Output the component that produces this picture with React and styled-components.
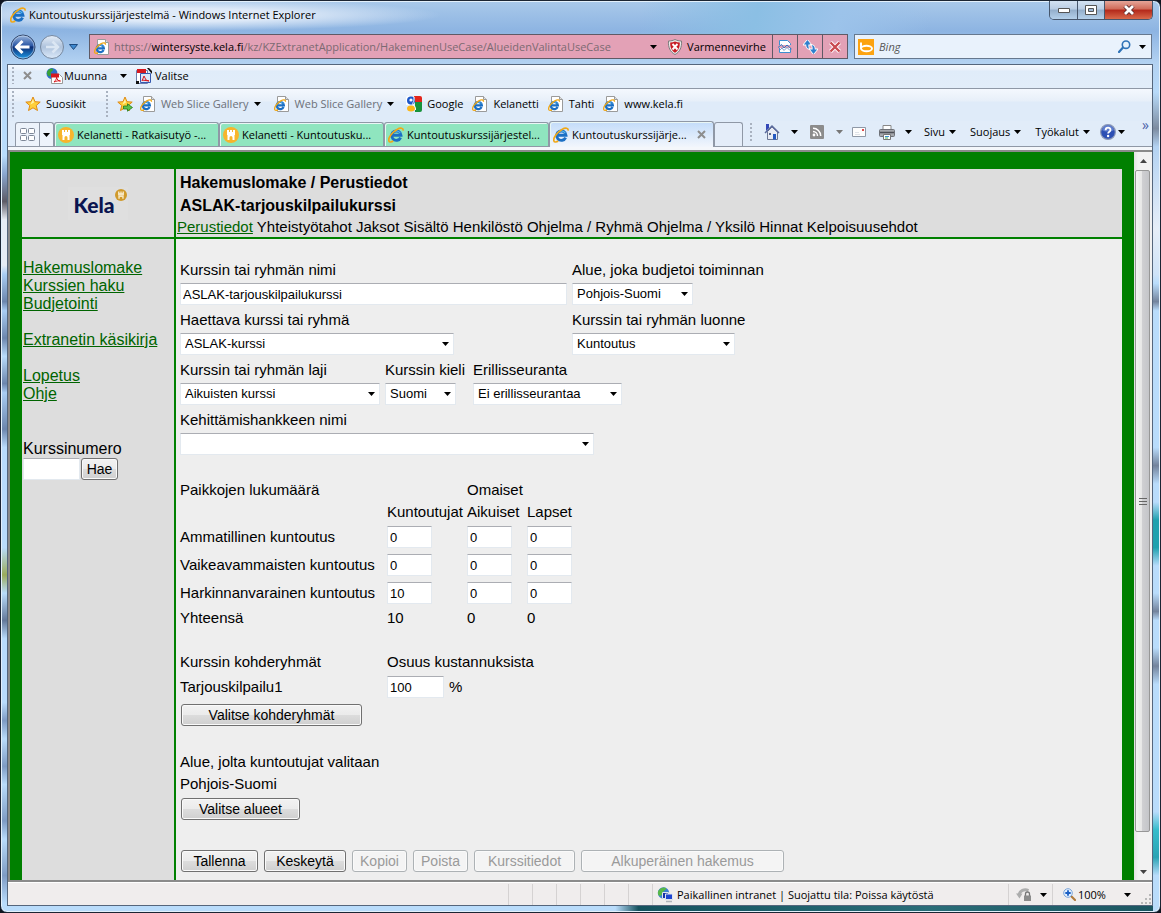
import React, { useState } from 'react';

// Styled Component
import styled, { createGlobalStyle, css } from 'styled-components';

const UI_FONT = "'Open Sans', 'Noto Sans', sans-serif";
const PAGE_FONT = "'Liberation Sans', Arial, sans-serif";

// Icons
const Caret = ({ color = '#000' }) => (
  <svg width='7' height='4' viewBox='0 0 7 4' aria-hidden='true'>
    <path d='M0 0h7L3.5 4z' fill={color} />
  </svg>
);

const IeMark = () => (
  <>
    <path
      d='M12.6 10.6A4.7 4.7 0 1 1 13 8.3H5'
      fill='none'
      stroke='#1b6fc4'
      strokeWidth='2.9'
    />
    <path
      d='M12.2 6.2A4.6 4.6 0 0 0 4.2 6.4'
      fill='none'
      stroke='#53b4ee'
      strokeWidth='1.3'
    />
    <path
      d='M15 3.6C15.6 1 12.6.4 9 2.4 4.6 5 .2 10.4.8 13.6c.5 2.2 3 1.4 4.4.4'
      fill='none'
      stroke='#f0a818'
      strokeWidth='1.7'
    />
  </>
);

const IeIcon = ({ size = 16 }) => (
  <svg width={size} height={size} viewBox='0 0 16 16' aria-hidden='true'>
    <IeMark />
  </svg>
);

const IePageIcon = () => (
  <svg width='16' height='16' viewBox='0 0 16 16' aria-hidden='true'>
    <path d='M3.5.5h8l3 3v12h-11z' fill='#fff' stroke='#9a9a9a' />
    <path d='M11.5.5v3h3' fill='#ddd' stroke='#9a9a9a' />
    <g transform='translate(0 3) scale(.76)'>
      <IeMark />
    </g>
  </svg>
);

const KelaIcon = () => (
  <svg width='16' height='16' viewBox='0 0 16 16' aria-hidden='true'>
    <circle cx='8' cy='8' r='8' fill='#f7b52c' />
    <path d='M4 3h2v2h1V3h2v2h1V3h2v5H4z' fill='#fff' />
    <path d='M4.500 8h7v5H9.500v-2.500a1.500 1.500 0 0 0-3 0V13h-2z' fill='#fff' />
  </svg>
);

const StarIcon = ({ add }) => (
  <svg width='16' height='16' viewBox='0 0 16 16' aria-hidden='true'>
    <path
      d='M8 1l2 4.700 5.200.4-4 3.400 1.300 5L8 11.800l-4.500 2.700 1.300-5-4-3.400 5.200-.4z'
      fill='#ffd03a'
      stroke='#e08a14'
    />
    <path d='M8 3l1 3.400-3.500 2z' fill='#fff3a8' />
    {add && (
      <path
        d='M6.500 10h4V7.800l5 3.700-5 3.700V13h-4z'
        fill='#5cc04a'
        stroke='#237a1c'
        strokeWidth='.8'
      />
    )}
  </svg>
);

const GoogleIcon = () => (
  <svg width='16' height='16' viewBox='0 0 16 16' aria-hidden='true'>
    <path d='M8 0h6a2 2 0 0 1 2 2v4H9z' fill='#e3251b' />
    <path d='M9 6h7v8a2 2 0 0 1-2 2H9z' fill='#17933c' />
    <path d='M0 2a2 2 0 0 1 2-2h2v9H0z' fill='#fff' />
    <circle cx='5' cy='4.500' r='4' fill='#1c57c9' />
    <circle cx='5' cy='4' r='1.600' fill='#fff' />
    <ellipse cx='5' cy='12.500' rx='4' ry='3' fill='#fbb719' />
    <path d='M8 1v3c0 2-2 3-1 4.500s3 2 2.500 5.500' fill='none' stroke='#fff' />
  </svg>
);

const ConvertIcon = () => (
  <svg width='17' height='16' viewBox='0 0 17 16' aria-hidden='true'>
    <circle cx='6' cy='5.500' r='5.500' fill='#2d6fc8' />
    <path d='M1 4c2-4 5-4 6-3s-1 2-2 3 1 3-1 4-3-2-3-4z' fill='#3aa335' />
    <path d='M5.500 6.500h8l3 3v6h-11z' fill='#fff' stroke='#9a9a9a' />
    <path d='M5 5.500h8v4H5z' fill='#d71920' />
    <path d='M8 14c2-2 3-4 2.500-5 .5 3 2 4 4 4-2-.5-4 0-6.500 1z' fill='none' stroke='#d71920' />
  </svg>
);

const SelectPdfIcon = () => (
  <svg width='16' height='16' viewBox='0 0 16 16' aria-hidden='true'>
    <path d='M.5 2.500h11v13H.5z' fill='#fff' stroke='#6b7fae' />
    <path d='M4.500 5.500h10v9h-10z' fill='#dbe6f8' stroke='#3559b0' />
    <path d='M1 1h9v4H1z' fill='#d71920' />
    <path d='M6 13l2-5 2 4 3 1-7-1' fill='none' stroke='#d71920' />
    <path d='M11 0h2l3 3v3z' fill='#111' />
    <path d='M0 13h3v3H0z' fill='#111' />
  </svg>
);

const ShieldIcon = () => (
  <svg width='16' height='16' viewBox='0 0 16 16' aria-hidden='true'>
    <path d='M8 .5c2 1 4 1.500 6.500 1.500C15 8 13 13 8 15.500 3 13 1 8 1.500 2 4 2 6 1.500 8 .5z' fill='#e9e9e9' stroke='#7d7d7d' />
    <path d='M8 2.500c1.500.7 3 1 4.800 1C13 8 11.500 11.800 8 13.800 4.500 11.800 3 8 3.200 3.500c1.800 0 3.300-.3 4.800-1z' fill='#c81d25' />
    <path d='M5.500 5l5 5.500M10.500 5l-5 5.500' stroke='#fff' strokeWidth='1.900' />
  </svg>
);

const CompatIcon = () => (
  <svg width='14' height='15' viewBox='0 0 14 15' aria-hidden='true'>
    <path d='M1.500 6V1.500h8l3 3V6' fill='#fff' stroke='#3d8fd0' />
    <path d='M1.500 9v4.500h11V9' fill='#fff' stroke='#3d8fd0' />
    <path d='M0 8.500l3.500-3L6 9l3-3 4.500 4' fill='none' stroke='#2b79c2' />
    <path d='M2 11l2-2 2 2.500 3-3 3 3' fill='none' stroke='#7a9fc8' />
  </svg>
);

const RefreshIcon = () => (
  <svg width='15' height='14' viewBox='0 0 15 14' aria-hidden='true'>
    <g stroke='#fff' strokeWidth='1.600' paintOrder='stroke' fill='#2f7fcd'>
      <path d='M4.500 0L.8 4.600h2.400c0 2.600.8 4 3.300 4.400C5.400 7.800 5.300 6.400 5.400 4.600H8z' />
      <path d='M10.500 14l3.700-4.600h-2.400c0-2.600-.8-4-3.300-4.400 1.100 1.200 1.200 2.600 1.100 4.400H7z' />
    </g>
  </svg>
);

const StopIcon = () => (
  <svg width='12' height='12' viewBox='0 0 12 12' aria-hidden='true'>
    <path d='M1.500 1.500l9 9M10.500 1.500l-9 9' stroke='#fff' strokeWidth='4' />
    <path d='M1.500 1.500l9 9M10.500 1.500l-9 9' stroke='#c94a4f' strokeWidth='2.400' />
  </svg>
);

const BingIcon = () => (
  <svg width='16' height='16' viewBox='0 0 16 16' aria-hidden='true'>
    <path d='M0 0h16v16H0z' fill='#fca311' />
    <path d='M3 3.500v6' stroke='#fff' strokeWidth='2' />
    <ellipse cx='8.500' cy='9.500' rx='5.500' ry='2.800' fill='none' stroke='#fff' strokeWidth='1.900' />
  </svg>
);

const SearchIcon = () => (
  <svg width='13' height='13' viewBox='0 0 13 13' aria-hidden='true'>
    <circle cx='8' cy='4.700' r='3.700' fill='#e6f2fc' stroke='#2f73b7' strokeWidth='1.600' />
    <path d='M5 7.600L1 12' stroke='#2f73b7' strokeWidth='2.200' strokeLinecap='round' />
  </svg>
);

const QuickTabsIcon = () => (
  <svg width='15' height='13' viewBox='0 0 15 13' fill='#fff' stroke='#7d8797' aria-hidden='true'>
    <rect x='.5' y='.5' width='6' height='5' rx='1' />
    <rect x='8.500' y='.5' width='6' height='5' rx='1' />
    <rect x='.5' y='7.500' width='6' height='5' rx='1' />
    <rect x='8.500' y='7.500' width='6' height='5' rx='1' />
  </svg>
);

const HomeIcon = () => (
  <svg width='16' height='16' viewBox='0 0 16 16' aria-hidden='true'>
    <path d='M2 0h3v4L2 7z' fill='#3347b8' />
    <path d='M3.500 7.500L8 3l5.500 5v7.500h-10z' fill='#e8ebf4' stroke='#6a7694' />
    <path d='M1 9l7-7 7 7' fill='none' stroke='#5a6a9c' strokeWidth='1.500' />
    <path d='M5 9h2v2H5z' fill='#59688c' />
    <path d='M9 10h3v5.500H9z' fill='#2458c0' />
  </svg>
);

const FeedIcon = () => (
  <svg width='14' height='14' viewBox='0 0 14 14' aria-hidden='true'>
    <rect width='14' height='14' rx='1' fill='#8c8c8c' />
    <circle cx='4' cy='10' r='1.400' fill='#fff' />
    <path d='M3 6.500A4.500 4.500 0 0 1 7.500 11M3 3.300A7.700 7.700 0 0 1 10.700 11' fill='none' stroke='#fff' strokeWidth='1.500' />
  </svg>
);

const MailIcon = () => (
  <svg width='14' height='10' viewBox='0 0 14 10' aria-hidden='true'>
    <path d='M.5.5h13v9H.5z' fill='#fdfdfd' stroke='#8f98a6' />
    <path d='M10 2h2v2h-2z' fill='#e04848' />
    <path d='M3 5.500h4M3 7.500h5' stroke='#dfe2e8' />
  </svg>
);

const PrinterIcon = () => (
  <svg width='16' height='15' viewBox='0 0 16 15' aria-hidden='true'>
    <path d='M4 .5h8V6H4z' fill='#fff' stroke='#888' />
    <rect x='.5' y='4.500' width='15' height='7' rx='1' fill='#a4a7ac' stroke='#6f7278' />
    <path d='M1 7.500h14' stroke='#4c4f55' strokeWidth='1.500' />
    <path d='M4.500 9.500h7v5h-7z' fill='#fff' stroke='#777' />
    <path d='M6 11.500h4' stroke='#3b8fd0' />
    <path d='M6 13h3' stroke='#4caf50' />
  </svg>
);

const HelpIcon = () => (
  <svg width='16' height='16' viewBox='0 0 16 16' aria-hidden='true'>
    <circle cx='8' cy='8' r='7.400' fill='#2c4fb4' stroke='#8d9ab8' strokeWidth='1.200' />
    <path d='M2 6a6.200 6.200 0 0 1 12 0c-3 2-9 2-12 0z' fill='#7f9be0' opacity='.6' />
    <path d='M5.600 6.200C5.600 2.800 10.600 3 10.500 6c0 1.700-2.400 1.800-2.400 3.600' fill='none' stroke='#fff' strokeWidth='1.800' />
    <circle cx='8.100' cy='12' r='1.200' fill='#fff' />
  </svg>
);

const IntranetIcon = () => (
  <svg width='16' height='16' viewBox='0 0 16 16' aria-hidden='true'>
    <circle cx='6.500' cy='6' r='5.700' fill='#3a7fd0' />
    <path d='M2 3c2-3 6-3 7-2S7 4 6 5 5 9 3 9s-3-4-1-6z' fill='#58b848' />
    <path d='M5.500 5.500h6v6h-6z' fill='#1531a8' stroke='#dfe4ee' />
    <path d='M8.500 7h7v5.500h-7z' fill='#1e45d0' stroke='#dfe4ee' />
    <path d='M9 14.500h6' stroke='#b0b4ba' strokeWidth='1.500' />
  </svg>
);

const PrivacyIcon = () => (
  <svg width='16' height='15' viewBox='0 0 16 15' aria-hidden='true'>
    <path d='M3 7.500C4 4 8 1.500 12.500 3.500' fill='none' stroke='#adadad' strokeWidth='3' />
    <path d='M0 6.500h6.500l-3 5z' fill='#adadad' />
    <path d='M9.500 9V7a2 2 0 0 1 4 0v2' fill='none' stroke='#777' strokeWidth='1.300' />
    <path d='M8 8.500h7V14H8z' fill='#8b8b8b' />
  </svg>
);

const ZoomIcon = () => (
  <svg width='13' height='13' viewBox='0 0 13 13' aria-hidden='true'>
    <path d='M8 8l4 4' stroke='#b07a3c' strokeWidth='2.200' strokeLinecap='round' />
    <circle cx='5' cy='5' r='4.300' fill='#e4f0ff' stroke='#7aa4d8' />
    <path d='M5 2.300v5.400M2.300 5h5.400' stroke='#1b5fc4' strokeWidth='1.800' />
  </svg>
);

const BackIcon = () => (
  <svg width='26' height='26' viewBox='0 0 26 26' aria-hidden='true'>
    <defs>
      <linearGradient id='back' x1='0' y1='0' x2='0' y2='1'>
        <stop offset='0' stopColor='#9db8de' />
        <stop offset='.45' stopColor='#2a56a4' />
        <stop offset='.5' stopColor='#0c2c74' />
        <stop offset='1' stopColor='#1e9ce8' />
      </linearGradient>
    </defs>
    <circle cx='13' cy='13' r='12' fill='url(#back)' stroke='#35496c' />
    <circle cx='13' cy='13' r='11' fill='none' stroke='#c5d7ee' strokeOpacity='.6' />
    <path d='M12.500 7L6.500 13l6 6M7.500 13h12' fill='none' stroke='#fff' strokeWidth='3' />
  </svg>
);

const ForwardIcon = () => (
  <svg width='26' height='26' viewBox='0 0 26 26' aria-hidden='true'>
    <defs>
      <linearGradient id='forward' x1='0' y1='0' x2='0' y2='1'>
        <stop offset='0' stopColor='#e6eef8' />
        <stop offset='.5' stopColor='#aec2dc' />
        <stop offset='1' stopColor='#dceafa' />
      </linearGradient>
    </defs>
    <circle cx='13' cy='13' r='11.500' fill='url(#forward)' stroke='#76889f' />
    <path d='M13.500 7.500l5.500 5.500-5.500 5.500M18 13H7' fill='none' stroke='#dbe6f3' strokeWidth='2.500' />
  </svg>
);

const KelaBadge = () => (
  <svg width='12' height='12' viewBox='0 0 12 12' aria-hidden='true'>
    <circle cx='6' cy='6' r='6' fill='#d09a2c' />
    <path d='M3 2.500h1.500V4h.8V2.500h1.400V4h.8V2.500H9v3.700H3z' fill='#f6e6c0' />
    <path d='M3.300 6.200h5.400v3.500H7.200V8H4.800v1.700H3.300z' fill='#f6e6c0' />
  </svg>
);

// Data
const tabs = [
  { title: 'Kelanetti - Ratkaisutyö -...', Icon: KelaIcon },
  { title: 'Kelanetti - Kuntoutusku...', Icon: KelaIcon },
  { title: 'Kuntoutuskurssijärjestel...', Icon: IeIcon },
  { title: 'Kuntoutuskurssijärje...', Icon: IeIcon, active: true },
];

const sections = [
  'Yhteistyötahot',
  'Jaksot',
  'Sisältö',
  'Henkilöstö',
  'Ohjelma / Ryhmä',
  'Ohjelma / Yksilö',
  'Hinnat',
  'Kelpoisuusehdot',
];

const menuGroups = [
  ['Hakemuslomake', 'Kurssien haku', 'Budjetointi'],
  ['Extranetin käsikirja'],
  ['Lopetus', 'Ohje'],
];

const initialPlaces = [
  { name: 'Ammatillinen kuntoutus', values: ['0', '0', '0'] },
  { name: 'Vaikeavammaisten kuntoutus', values: ['0', '0', '0'] },
  { name: 'Harkinnanvarainen kuntoutus', values: ['10', '0', '0'] },
];

const placeColumns = ['Kuntoutujat', 'Aikuiset', 'Lapset'];

const SelectField = ({ id, label, width, wide, value }) => (
  <Field $width={wide}>
    <label htmlFor={id}>{label}</label>
    <SelectBox $width={width}>
      <select id={id} defaultValue={value}>
        <option>{value}</option>
      </select>
      <Caret />
    </SelectBox>
  </Field>
);

function CourseForm() {
  const [places, setPlaces] = useState(initialPlaces);

  const placeHandler = (row, col, value) => {
    setPlaces(
      places.map((place, i) =>
        i === row
          ? { ...place, values: place.values.map((v, j) => (j === col ? value : v)) }
          : place
      )
    );
  };

  const total = (col) =>
    places.reduce((sum, place) => sum + (Number(place.values[col]) || 0), 0);

  return (
    <Form onSubmit={(e) => e.preventDefault()}>
      <FieldRows>
        <FieldRow>
          <Field $width={387}>
            <label htmlFor='nimi'>Kurssin tai ryhmän nimi</label>
            <TextInput id='nimi' defaultValue='ASLAK-tarjouskilpailukurssi' />
          </Field>
          <SelectField id='alue' label='Alue, joka budjetoi toiminnan' width={121} value='Pohjois-Suomi' />
        </FieldRow>
        <FieldRow>
          <SelectField id='haettava' label='Haettava kurssi tai ryhmä' width={274} wide={387} value='ASLAK-kurssi' />
          <SelectField id='luonne' label='Kurssin tai ryhmän luonne' width={163} value='Kuntoutus' />
        </FieldRow>
        <FieldRow>
          <SelectField id='laji' label='Kurssin tai ryhmän laji' width={200} wide={200} value='Aikuisten kurssi' />
          <SelectField id='kieli' label='Kurssin kieli' width={71} wide={83} value='Suomi' />
          <SelectField id='seuranta' label='Erillisseuranta' width={149} value='Ei erillisseurantaa' />
        </FieldRow>
        <FieldRow>
          <SelectField id='hanke' label='Kehittämishankkeen nimi' width={414} value='' />
        </FieldRow>
      </FieldRows>

      <PlacesTable>
        <colgroup>
          <col className='name' />
          <col className='first' />
          <col className='other' />
          <col className='other' />
        </colgroup>
        <thead>
          <tr>
            <th colSpan='2'>Paikkojen lukumäärä</th>
            <th colSpan='2'>Omaiset</th>
          </tr>
          <tr>
            <td />
            {placeColumns.map((column) => (
              <th key={column}>{column}</th>
            ))}
          </tr>
        </thead>
        <tbody>
          {places.map((place, row) => (
            <InputRow key={place.name}>
              <th>{place.name}</th>
              {place.values.map((value, col) => (
                <td key={placeColumns[col]}>
                  <TextInput
                    $width={45}
                    aria-label={`${place.name}, ${placeColumns[col]}`}
                    value={value}
                    onChange={(e) => placeHandler(row, col, e.target.value)}
                  />
                </td>
              ))}
            </InputRow>
          ))}
          <tr>
            <th>Yhteensä</th>
            {placeColumns.map((column, col) => (
              <td key={column}>{total(col)}</td>
            ))}
          </tr>
        </tbody>
      </PlacesTable>

      <TargetTable>
        <colgroup>
          <col className='name' />
          <col />
        </colgroup>
        <thead>
          <tr>
            <th>Kurssin kohderyhmät</th>
            <th>Osuus kustannuksista</th>
          </tr>
        </thead>
        <tbody>
          <InputRow>
            <th>
              <label htmlFor='osuus'>Tarjouskilpailu1</label>
            </th>
            <td>
              <PercentCell>
                <TextInput id='osuus' $width={57} defaultValue='100' />
                %
              </PercentCell>
            </td>
          </InputRow>
        </tbody>
      </TargetTable>
      <FormButton type='button' $width={181}>
        Valitse kohderyhmät
      </FormButton>

      <AreaBlock>
        <p>Alue, jolta kuntoutujat valitaan</p>
        <p>Pohjois-Suomi</p>
      </AreaBlock>
      <FormButton type='button' $width={119}>
        Valitse alueet
      </FormButton>

      <Actions>
        <FormButton $width={77}>Tallenna</FormButton>
        <FormButton type='button' $width={82}>Keskeytä</FormButton>
        <FormButton type='button' $width={55} disabled>Kopioi</FormButton>
        <FormButton type='button' $width={55} disabled>Poista</FormButton>
        <FormButton type='button' $width={101} disabled>Kurssitiedot</FormButton>
        <FormButton type='button' $width={203} disabled>Alkuperäinen hakemus</FormButton>
      </Actions>
    </Form>
  );
}

function App() {
  return (
    <>
      <GlobalStyle />
      <Window>
        <TitleBar>
          <IeIcon />
          <h1>Kuntoutuskurssijärjestelmä - Windows Internet Explorer</h1>
          <WindowButtons>
            <WindowButton aria-label='Pienennä' $width={28}>
              <svg width='12' height='5' viewBox='0 0 12 5'>
                <path d='M.5.500h11v4H.5z' fill='#fff' stroke='#555' />
              </svg>
            </WindowButton>
            <WindowButton aria-label='Suurenna' $width={27}>
              <svg width='12' height='10' viewBox='0 0 12 10'>
                <path d='M.5.500h11v9H.5z' fill='#fff' stroke='#555' />
                <path d='M3.500 3.500h5v3h-5z' fill='#9db8d6' stroke='#555' />
              </svg>
            </WindowButton>
            <WindowButton aria-label='Sulje' $width={47} $close>
              <svg width='12' height='10' viewBox='0 0 12 10'>
                <path d='M2 1l8 8M10 1L2 9' stroke='#5a2a2a' strokeWidth='4.500' />
                <path d='M2 1l8 8M10 1L2 9' stroke='#fff' strokeWidth='2.800' />
              </svg>
            </WindowButton>
          </WindowButtons>
        </TitleBar>

        <NavBar>
          <RoundButton aria-label='Takaisin'>
            <BackIcon />
          </RoundButton>
          <RoundButton aria-label='Eteenpäin'>
            <ForwardIcon />
          </RoundButton>
          <HistoryButton aria-label='Viimeisimmät sivut'>
            <svg width='9' height='6' viewBox='0 0 9 6'>
              <path d='M.5.500h8l-4 5z' fill='#3f8ad0' stroke='#1c4a80' />
            </svg>
          </HistoryButton>
          <AddressBar>
            <IePageIcon />
            <p>
              https://<b>wintersyste.kela.fi</b>/kz/KZExtranetApplication/HakeminenUseCase/AlueidenValintaUseCase
            </p>
            <PlainButton aria-label='Näytä osoitteet'>
              <Caret />
            </PlainButton>
            <CertButton>
              <ShieldIcon />
              Varmennevirhe
            </CertButton>
            <AddressButton aria-label='Yhteensopivuusnäkymä'>
              <CompatIcon />
            </AddressButton>
            <AddressButton aria-label='Päivitä'>
              <RefreshIcon />
            </AddressButton>
            <AddressButton aria-label='Pysäytä'>
              <StopIcon />
            </AddressButton>
          </AddressBar>
          <SearchBar>
            <BingIcon />
            <input type='text' placeholder='Bing' aria-label='Haku' />
            <PlainButton aria-label='Hae verkosta'>
              <SearchIcon />
            </PlainButton>
            <PlainButton aria-label='Hakuasetukset'>
              <Caret />
            </PlainButton>
          </SearchBar>
        </NavBar>

        <Client>
          <Toolbar>
            <Grip />
            <ToolButton aria-label='Sulje työkalurivi' $left={9}>
              <svg width='9' height='9' viewBox='0 0 9 9'>
                <path d='M1 1l7 7M8 1L1 8' stroke='#8d8d8d' strokeWidth='2' />
              </svg>
            </ToolButton>
            <ToolButton $left={14} $gap={1}>
              <ConvertIcon />
              Muunna
            </ToolButton>
            <ToolButton aria-label='Muunna-valikko' $left={13}>
              <Caret />
            </ToolButton>
            <ToolButton $left={9} $gap={3}>
              <SelectPdfIcon />
              Valitse
            </ToolButton>
          </Toolbar>

          <FavoritesBar>
            <Grip />
            <ToolButton $left={11}>
              <StarIcon />
              Suosikit
            </ToolButton>
            <Grip $left={20} />
            <ToolButton aria-label='Lisää suosikkeihin' $left={9}>
              <StarIcon add />
            </ToolButton>
            <ToolButton $left={7} $muted>
              <IePageIcon />
              Web Slice Gallery
              <Caret />
            </ToolButton>
            <ToolButton $left={13} $muted>
              <IePageIcon />
              Web Slice Gallery
              <Caret />
            </ToolButton>
            <ToolButton $left={12}>
              <GoogleIcon />
              Google
            </ToolButton>
            <ToolButton $left={9}>
              <IePageIcon />
              Kelanetti
            </ToolButton>
            <ToolButton $left={9}>
              <IePageIcon />
              Tahti
            </ToolButton>
            <ToolButton $left={9}>
              <IePageIcon />
              www.kela.fi
            </ToolButton>
          </FavoritesBar>

          <TabRow>
            <QuickTabs>
              <button aria-label='Pikavälilehdet'>
                <QuickTabsIcon />
              </button>
              <button aria-label='Välilehtiluettelo'>
                <Caret />
              </button>
            </QuickTabs>
            {tabs.map(({ title, Icon, active }) => (
              <Tab key={title} $active={active}>
                <Icon />
                <span>{title}</span>
                {active && (
                  <svg width='9' height='9' viewBox='0 0 9 9'>
                    <path d='M1 1l7 7M8 1L1 8' stroke='#8d8d8d' strokeWidth='2' />
                  </svg>
                )}
              </Tab>
            ))}
            <NewTab aria-label='Uusi välilehti' />
            <CommandBar>
              <Grip />
              <ToolButton aria-label='Aloitussivu' $left={12} $gap={11}>
                <HomeIcon />
                <Caret />
              </ToolButton>
              <ToolButton aria-label='Syötteet' $left={12} $gap={12}>
                <FeedIcon />
                <Caret color='#777' />
              </ToolButton>
              <ToolButton aria-label='Lue sähköposti' $left={9}>
                <MailIcon />
              </ToolButton>
              <ToolButton aria-label='Tulosta' $left={13} $gap={10}>
                <PrinterIcon />
                <Caret />
              </ToolButton>
              <ToolButton $left={12} $gap={4}>
                Sivu
                <Caret />
              </ToolButton>
              <ToolButton $left={14} $gap={4}>
                Suojaus
                <Caret />
              </ToolButton>
              <ToolButton $left={14} $gap={4}>
                Työkalut
                <Caret />
              </ToolButton>
              <ToolButton aria-label='Ohje' $left={10} $gap={2}>
                <HelpIcon />
                <Caret />
              </ToolButton>
              <MoreButton aria-label='Lisää komentoja'>»</MoreButton>
            </CommandBar>
          </TabRow>

          <Viewport>
            <Page>
              <LogoCell>
                <Logo>
                  <strong>Kela</strong>
                  <KelaBadge />
                </Logo>
              </LogoCell>
              <PageHeader>
                <h2>Hakemuslomake / Perustiedot</h2>
                <h2>ASLAK-tarjouskilpailukurssi</h2>
                <nav>
                  <PageLink href='#perustiedot'>Perustiedot</PageLink> {sections.join(' ')}
                </nav>
              </PageHeader>
              <Sidebar>
                {menuGroups.map((group) => (
                  <ul key={group[0]}>
                    {group.map((item) => (
                      <li key={item}>
                        <PageLink href='#menu'>{item}</PageLink>
                      </li>
                    ))}
                  </ul>
                ))}
                <CourseSearch onSubmit={(e) => e.preventDefault()}>
                  <label htmlFor='kurssinumero'>Kurssinumero</label>
                  <div>
                    <TextInput id='kurssinumero' $width={57} />
                    <FormButton $width={37}>Hae</FormButton>
                  </div>
                </CourseSearch>
              </Sidebar>
              <CourseForm />
            </Page>
            <ScrollBar aria-hidden='true'>
              <ScrollArrow $up>
                <Caret color='#444' />
              </ScrollArrow>
              <ScrollThumb>
                <i />
                <i />
                <i />
              </ScrollThumb>
              <ScrollArrow>
                <Caret color='#444' />
              </ScrollArrow>
            </ScrollBar>
          </Viewport>

          <StatusBar>
            <StatusSlots>
              <i />
              <i />
              <i />
              <i />
              <i />
              <i />
            </StatusSlots>
            <StatusCell $width={356}>
              <IntranetIcon />
              Paikallinen intranet | Suojattu tila: Poissa käytöstä
            </StatusCell>
            <StatusCell $width={44} $left={7} $gap={8}>
              <PrivacyIcon />
              <Caret />
            </StatusCell>
            <StatusCell $width={100} $left={10} $gap={2}>
              <ZoomIcon />
              <span>100%</span>
              <Caret />
              <ResizeGrip width='11' height='11' viewBox='0 0 11 11'>
                <path d='M8 0h2v2H8zM4 4h2v2H4zM8 4h2v2H8zM0 8h2v2H0zM4 8h2v2H4zM8 8h2v2H8z' fill='#b9b9b9' />
              </ResizeGrip>
            </StatusCell>
          </StatusBar>
        </Client>
      </Window>
    </>
  );
}

const GlobalStyle = createGlobalStyle`
  * {
    box-sizing: border-box;
  }

  body {
    margin: 0;
    background: #10151f;
    font: 11px/16px ${UI_FONT};
    color: #000;
  }

  h1, h2, p, ul {
    margin: 0;
    padding: 0;
    font: inherit;
  }

  li {
    list-style: none;
  }

  button, input, select {
    font: inherit;
    color: inherit;
  }

  svg {
    display: block;
    flex: none;
  }
`;

// Desktop showing through the glass at the window sides
const leftGlass = `linear-gradient(
  transparent 17%, #8aa6cf 19%, #5d5b66 22%, #e6ecf4 24%, #e6ecf4 29%, #a9cdf3 30%,
  #6c86ad 33%, #a9cdf3 34%, #6c86ad 37%, #b9dcfb 39%, #6c86ad 42%, #a9cdf3 43%,
  #6c86ad 47%, #b9dcfb 49%, #b9dcfb 60%, #9aab5c 63%, #b9dcfb 65%, #64799a 68%,
  #b9dcfb 70%, #b9dcfb 77%, #7e9bc4 79%, #b9dcfb 81%, #7e9bc4 84%, #b9dcfb 86%,
  #7e9bc4 90%, #b9dcfb 92%, #7e9bc4 96%, #b9dcfb 99%
)`;

const rightGlass = `linear-gradient(
  transparent 10%, #7c8ba0 14%, #b3d2f2 16%, #e6eef8 25%, #cfe3f8 30%, #b9dcfb 31%,
  #73839c 33%, #b9dcfb 34%, #b9dcfb 49%, #73839c 51%, #b9dcfb 53%, #b9dcfb 55%,
  #1fa0ae 57%, #1fa0ae 60%, #b9dcfb 62%, #b9dcfb 65%, #73839c 67%, #b9dcfb 68%,
  #b9dcfb 71%, #73839c 73%, #b9dcfb 75%, #b9dcfb 89%, #36bccb 91%, #2aa3b4 94%,
  #b9dcfb 96%
)`;

const Window = styled.div`
  min-height: 100vh;
  display: flex;
  flex-direction: column;
  padding: 0 7px 6px 6px;
  border: 1px solid #1b2533;
  border-radius: 7px;
  box-shadow: inset 0 0 0 1px #e3f0fb;
  background:
    ${leftGlass} 0 0 / 6px 100% no-repeat,
    ${rightGlass} 100% 0 / 7px 100% no-repeat,
    radial-gradient(ellipse 260px 16px at 180px 14px, #dfeaf8 40%, transparent),
    linear-gradient(100deg, transparent 55%, #8bbfe4 65%, #9cc3ea 72%, transparent 80%) 0 0 / 100% 40px no-repeat,
    linear-gradient(90deg, transparent 53%, #15525e 55%, #2a6d78 80%, #1b5560) 0 100% / 100% 7px no-repeat,
    linear-gradient(#a9c9ea, #8db4e2 30px, #b3d2f2 62px, #b9dcfb 100px);
`;

const TitleBar = styled.header`
  display: flex;
  align-items: center;
  gap: 3px;
  height: 29px;
  padding: 0 0 2px 3px;

  h1 {
    flex: 1;
  }
`;

const WindowButtons = styled.div`
  display: flex;
  align-self: flex-start;
  border: 1px solid #46566c;
  border-top: none;
  border-radius: 0 0 5px 5px;
  overflow: hidden;
`;

const WindowButton = styled.button`
  display: flex;
  align-items: center;
  justify-content: center;
  width: ${({ $width }) => $width}px;
  height: 18px;
  padding: 0;
  border: none;
  border-right: 1px solid #46566c;
  background: linear-gradient(#d3e2f2, #b9cde4 45%, #93aecb 50%, #b4d0ea);

  ${({ $close }) =>
    $close &&
    css`
      border-right: none;
      background: linear-gradient(#e5a598, #cf6a58 45%, #b3281a 50%, #d9694a);
    `}
`;

const NavBar = styled.div`
  display: flex;
  align-items: center;
  height: 34px;
  padding: 0 1px 1px 3px;
`;

const RoundButton = styled.button`
  padding: 0;
  margin-right: 3px;
  border: none;
  background: none;
`;

const HistoryButton = styled.button`
  padding: 0;
  margin: 0 11px 0 1px;
  border: none;
  background: none;
`;

const AddressBar = styled.div`
  flex: 1;
  display: flex;
  align-items: center;
  height: 25px;
  min-width: 0;
  padding-left: 4px;
  border: 1px solid #5f5a66;
  background: #e3a1b6;

  p {
    flex: 1;
    min-width: 0;
    margin-left: 4px;
    overflow: hidden;
    white-space: nowrap;
    color: #7b6a72;
  }

  b {
    font-weight: 400;
    color: #000;
  }
`;

const PlainButton = styled.button`
  padding: 0 4px;
  border: none;
  background: none;
`;

const CertButton = styled.button`
  display: flex;
  align-items: center;
  gap: 4px;
  padding: 0 6px;
  border: none;
  background: none;
`;

const AddressButton = styled.button`
  display: flex;
  align-items: center;
  justify-content: center;
  align-self: stretch;
  width: 25px;
  padding: 0;
  border: none;
  border-left: 1px solid #5f5a66;
  background: none;
`;

const SearchBar = styled.div`
  display: flex;
  align-items: center;
  width: 298px;
  height: 25px;
  margin-left: 6px;
  padding: 0 1px 0 3px;
  border: 1px solid #66788e;
  background: #e9f2fc;

  input {
    flex: 1;
    min-width: 0;
    padding: 0 5px;
    border: none;
    outline: none;
    background: none;
    font-style: italic;
  }

  input::placeholder {
    color: #555;
  }
`;

const Client = styled.div`
  flex: 1;
  display: flex;
  flex-direction: column;
  border: 1px solid #55667c;
`;

const Toolbar = styled.div`
  display: flex;
  align-items: center;
  height: 24px;
  padding: 0 0 2px 4px;
  border-bottom: 1px solid #8f98a6;
  background: linear-gradient(#f6faff, #e9f0fa 5px, #e0ecf9 6px, #e2edf9);
`;

const FavoritesBar = styled.div`
  display: flex;
  align-items: center;
  height: 32px;
  padding: 0 0 2px 4px;
  background: linear-gradient(#f4f8fe, #e7eff9 12px, #dfebf9 13px);
`;

const Grip = styled.span`
  align-self: stretch;
  width: 2px;
  margin: 2px 0 2px ${({ $left = 0 }) => $left}px;
  background: repeating-linear-gradient(#a9b2c0 0 2px, transparent 2px 4px);
`;

const ToolButton = styled.button`
  display: flex;
  align-items: center;
  gap: ${({ $gap = 5 }) => $gap}px;
  margin-left: ${({ $left }) => $left}px;
  padding: 0;
  border: none;
  background: none;
  white-space: nowrap;
  color: ${({ $muted }) => ($muted ? '#6d7078' : '#000')};
`;

const TabRow = styled.div`
  display: flex;
  align-items: flex-end;
  height: 26px;
  padding-left: 7px;
  border-bottom: 1px solid #8f98a6;
  background: #e1ecf9;
`;

const tabShape = css`
  border: 1px solid #8f98a6;
  border-bottom: none;
  border-radius: 3px 3px 0 0;
`;

const QuickTabs = styled.div`
  ${tabShape}
  display: flex;
  height: 24px;
  background: #edf3fb;

  button {
    display: flex;
    align-items: center;
    justify-content: center;
    width: 23px;
    padding: 0;
    border: none;
    background: none;
  }

  button + button {
    width: 14px;
    border-left: 1px solid #8f98a6;
  }
`;

const Tab = styled.button`
  ${tabShape}
  display: flex;
  align-items: center;
  gap: 3px;
  width: 165px;
  height: ${({ $active }) => ($active ? 26 : 24)}px;
  margin-bottom: ${({ $active }) => ($active ? -1 : 0)}px;
  padding: 0 7px 0 3px;
  background: ${({ $active }) =>
    $active ? 'linear-gradient(#c3dcfa, #f2f6fc)' : '#8fe5bf'};
  box-shadow: inset 1px 1px #e9f6f5;
  text-align: left;

  span {
    flex: 1;
    overflow: hidden;
    white-space: nowrap;
  }
`;

const NewTab = styled.button`
  ${tabShape}
  width: 29px;
  height: 24px;
  background: #e4edf9;
`;

const CommandBar = styled.div`
  flex: 1;
  align-self: stretch;
  display: flex;
  align-items: center;
  padding: 0 0 3px 7px;
`;

const MoreButton = styled.button`
  align-self: flex-start;
  margin-left: auto;
  padding: 0 3px;
  border: none;
  background: none;
  font-size: 14px;
  line-height: 8px;
  color: #4a5fa8;
`;

const Viewport = styled.div`
  flex: 1;
  display: flex;
  margin-top: 3px;
  border: 1px solid #8a8a8a;
  border-width: 2px 0 0 2px;
  box-shadow: 0 -3px #f4f7fb;
`;

const Page = styled.main`
  flex: 1;
  display: grid;
  grid-template-columns: 152px 1fr;
  grid-template-rows: 68px 1fr;
  gap: 2px;
  padding: 17px 12px 0;
  background: #008000;
  font: 16px/18px ${PAGE_FONT};
`;

const LogoCell = styled.div`
  display: flex;
  align-items: center;
  justify-content: center;
  background: #ddd;
`;

const Logo = styled.div`
  display: flex;
  align-items: flex-start;
  padding: 2px 1px 2px 5px;
  background: #dfdfdf;

  strong {
    padding-top: 3px;
    font: 900 21px/26px Lato, sans-serif;
    color: #0b1550;
  }
`;

const PageHeader = styled.div`
  padding: 2px 0 0 1px;
  background: #ddd;

  h2 {
    padding-left: 3px;
    font-weight: 700;
    line-height: 23px;
  }

  nav {
    font-size: 15px;
    line-height: 20px;
  }
`;

const PageLink = styled.a`
  color: #006400;
`;

const Sidebar = styled.aside`
  padding: 20px 0 0 1px;
  background: #ddd;

  ul {
    margin-bottom: 18px;
  }
`;

const CourseSearch = styled.form`
  margin-top: 37px;

  label {
    display: block;
  }

  div {
    display: flex;
  }
`;

const Form = styled.form`
  padding: 22px 4px 8px;
  background: #eee;
  font-size: 15px;
`;

const FieldRows = styled.div`
  display: flex;
  flex-direction: column;
  gap: 6px;
`;

const FieldRow = styled.div`
  display: flex;
  gap: 5px;
`;

const Field = styled.div`
  display: flex;
  flex-direction: column;
  gap: 4px;
  width: ${({ $width }) => ($width ? `${$width}px` : 'auto')};
  white-space: nowrap;
`;

const controlBox = css`
  height: 22px;
  border: 1px solid #e3e9ef;
  border-top-color: #abadb3;
  background: #fff;
  font: 13px/16px ${PAGE_FONT};
`;

const TextInput = styled.input`
  ${controlBox}
  width: ${({ $width }) => ($width ? `${$width}px` : '100%')};
  padding: 0 2px;
`;

const SelectBox = styled.div`
  position: relative;
  width: ${({ $width }) => $width}px;

  select {
    ${controlBox}
    display: block;
    width: 100%;
    padding: 0 16px 0 4px;
    border-radius: 0;
    appearance: none;
  }

  svg {
    position: absolute;
    top: 9px;
    right: 5px;
    pointer-events: none;
  }
`;

const PlacesTable = styled.table`
  margin-top: 24px;
  border-collapse: collapse;
  table-layout: fixed;
  width: 407px;

  th,
  td {
    height: 22px;
    padding: 0;
    font-weight: 400;
    text-align: left;
    white-space: nowrap;
  }

  .name {
    width: 207px;
  }

  .first {
    width: 80px;
  }

  .other {
    width: 60px;
  }
`;

const TargetTable = styled(PlacesTable)`
  margin: 22px 0 3px;
`;

const InputRow = styled.tr`
  && > th,
  && > td {
    height: 28px;
    vertical-align: middle;
  }

  input {
    vertical-align: middle;
  }
`;

const PercentCell = styled.div`
  display: flex;
  align-items: center;
  gap: 5px;
`;

const FormButton = styled.button`
  display: block;
  width: ${({ $width }) => $width}px;
  height: 22px;
  margin-left: 1px;
  padding: 0;
  border: 1px solid #707070;
  border-radius: 3px;
  box-shadow: inset 0 0 0 1px #fafafa;
  background: linear-gradient(#f2f2f2, #ebebeb 50%, #ddd 50%, #cfcfcf);
  font: 14px/16px ${PAGE_FONT};
  white-space: nowrap;

  &:disabled {
    border-color: #adb2b5;
    background: #f4f4f4;
    color: #9a9a9a;
  }
`;

const AreaBlock = styled.div`
  margin: 25px 0 3px;
  line-height: 22px;
`;

const Actions = styled.div`
  display: flex;
  gap: 5px;
  margin-top: 30px;
`;

const ScrollBar = styled.div`
  display: flex;
  flex-direction: column;
  width: 18px;
  background: linear-gradient(90deg, #e3e3e3, #f2f2f2 4px, #f2f2f2);
`;

const ScrollArrow = styled.span`
  display: flex;
  align-items: center;
  justify-content: center;
  height: 17px;

  svg {
    transform: ${({ $up }) => ($up ? 'rotate(180deg)' : 'none')};
  }
`;

const ScrollThumb = styled.span`
  flex: 1;
  display: flex;
  flex-direction: column;
  align-items: center;
  justify-content: center;
  gap: 2px;
  margin: 1px 2px 31px 1px;
  border: 1px solid #979797;
  border-radius: 2px;
  background: linear-gradient(90deg, #f4f4f4, #e6e6e6 45%, #cfcfd2 50%, #c4c5c9);

  i {
    width: 8px;
    height: 1px;
    background: #666;
  }
`;

const StatusBar = styled.footer`
  display: flex;
  height: 25px;
  padding-top: 2px;
  border-top: 2px solid #8b8b8b;
  background: #f0eded;
  box-shadow: inset 0 1px #fff;
`;

const StatusSlots = styled.div`
  flex: 1;
  display: flex;
  justify-content: flex-end;

  i {
    width: 24px;
    border-left: 1px solid #d5d2d2;
  }
`;

const StatusCell = styled.div`
  display: flex;
  align-items: center;
  gap: ${({ $gap = 4 }) => $gap}px;
  width: ${({ $width }) => $width}px;
  padding-left: ${({ $left = 4 }) => $left}px;
  border-left: 1px solid #d5d2d2;
  white-space: nowrap;

  span {
    flex: none;
    width: 44px;
  }
`;

const ResizeGrip = styled.svg`
  align-self: flex-end;
  margin-left: auto;
`;

export default App;
